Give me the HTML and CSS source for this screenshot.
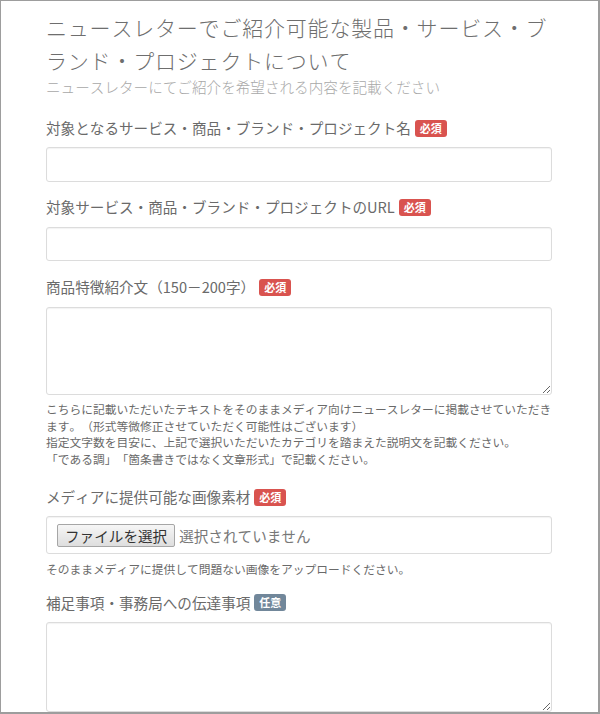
FILE: index.html
```html
<!DOCTYPE html>
<html lang="ja">
<head>
<meta charset="utf-8">
<title>ニュースレター</title>
<link rel="stylesheet" href="styles.css">
</head>
<body>
<div class="frame">
  <div class="content">
    <h1 class="title">ニュースレターでご紹介可能な製品・サービス・ブランド・プロジェクトについて</h1>
    <p class="subtitle">ニュースレターにてご紹介を希望される内容を記載ください</p>

    <div class="group g1">
      <label class="label">対象となるサービス・商品・ブランド・プロジェクト名<span class="badge req">必須</span></label>
      <input class="control" type="text">
    </div>

    <div class="group g2">
      <label class="label">対象サービス・商品・ブランド・プロジェクトのURL<span class="badge req">必須</span></label>
      <input class="control ctl2" type="text">
    </div>

    <div class="group g3">
      <label class="label">商品特徴紹介文（150－200字）<span class="badge req">必須</span></label>
      <textarea class="control area1"></textarea>
      <p class="help help1">こちらに記載いただいたテキストをそのままメディア向けニュースレターに掲載させていただきます。（形式等微修正させていただく可能性はございます）<br>指定文字数を目安に、上記で選択いただいたカテゴリを踏まえた説明文を記載ください。<br>「である調」「箇条書きではなく文章形式」で記載ください。</p>
    </div>

    <div class="group g4">
      <label class="label">メディアに提供可能な画像素材<span class="badge req">必須</span></label>
      <div class="control filebox">
        <span class="filebtn">ファイルを選択</span>
        <span class="filename">選択されていません</span>
      </div>
      <p class="help help2">そのままメディアに提供して問題ない画像をアップロードください。</p>
    </div>

    <div class="group g5">
      <label class="label">補足事項・事務局への伝達事項<span class="badge opt">任意</span></label>
      <textarea class="control area2"></textarea>
    </div>
  </div>
</div>
</body>
</html>
```

FILE: styles.css
```css
* {
  box-sizing: border-box;
}

html, body {
  margin: 0;
  padding: 0;
  background: #ffffff;
}

body {
  font-family: "Noto Sans CJK JP", "Noto Sans", sans-serif;
  color: #666666;
  text-spacing-trim: space-all;
  font-kerning: none;
  font-feature-settings: "kern" 0, "palt" 0;
}

.frame {
  width: 600px;
  height: 714px;
  border: 1px solid #9d9d9d;
  border-right-width: 2px;
  border-bottom-width: 2px;
  overflow: hidden;
  background: #ffffff;
}

.content {
  padding: 10px 46px 0 45px;
  display: flex;
  flex-direction: column;
}

.title {
  margin: 0;
  font-size: 21px;
  line-height: 33px;
  font-weight: 300;
  letter-spacing: 0.8px;
  color: #6e6e6e;
}

.subtitle {
  margin: 0;
  font-size: 14.6px;
  line-height: 20px;
  font-weight: 300;
  color: #a8a8a8;
}

.group {
  display: flex;
  flex-direction: column;
}

.g1 { margin-top: 21px; }
.g2 { margin-top: 15px; }
.g3 { margin-top: 16px; }
.g4 { margin-top: 20px; }
.g5 { margin-top: 15px; }

.label {
  display: flex;
  align-items: center;
  font-size: 14.6px;
  line-height: 20px;
  height: 20px;
  color: #6a6a6a;
  margin-bottom: 9px;
  white-space: nowrap;
}

.g2 .label, .g3 .label { margin-bottom: 10px; }

.badge {
  display: inline-block;
  margin-left: 4px;
  padding: 0 5px;
  height: 17px;
  line-height: 17px;
  font-size: 11px;
  font-weight: 700;
  letter-spacing: 0;
  color: #ffffff;
  border-radius: 3px;
}

.req {
  background: #d9534f;
}

.opt {
  background: #71879a;
}

.control {
  display: block;
  width: 506px;
  margin: 0;
  border: 1px solid #dcdcdc;
  border-radius: 3px;
  background: #ffffff;
  box-shadow: inset 0 1px 1px rgba(0, 0, 0, 0.05);
  font-family: inherit;
  font-size: 14.6px;
  color: #555555;
  outline: none;
}

input.control {
  height: 35px;
  padding: 4px 9px;
}

input.ctl2 {
  height: 34px;
}

textarea.control {
  resize: vertical;
  padding: 4px 9px;
}

.area1 {
  height: 88px;
}

.area2 {
  height: 90px;
}

.filebox {
  height: 38px;
  display: flex;
  align-items: center;
  padding: 0 10px;
  gap: 4px;
}

.filebtn {
  display: inline-block;
  height: 23px;
  line-height: 21px;
  padding: 0 7px;
  font-size: 14.6px;
  color: #333333;
  border: 1px solid #a6a6a6;
  border-radius: 2px;
  background: linear-gradient(#f6f6f6, #dedede);
  white-space: nowrap;
}

.filename {
  font-size: 14.6px;
  color: #777777;
  white-space: nowrap;
}

.help {
  margin: 0;
  font-size: 11.75px;
  line-height: 16.5px;
  color: #6a6a6a;
}

.help1 {
  margin-top: 6px;
}

.help2 {
  margin-top: 7px;
}
```
